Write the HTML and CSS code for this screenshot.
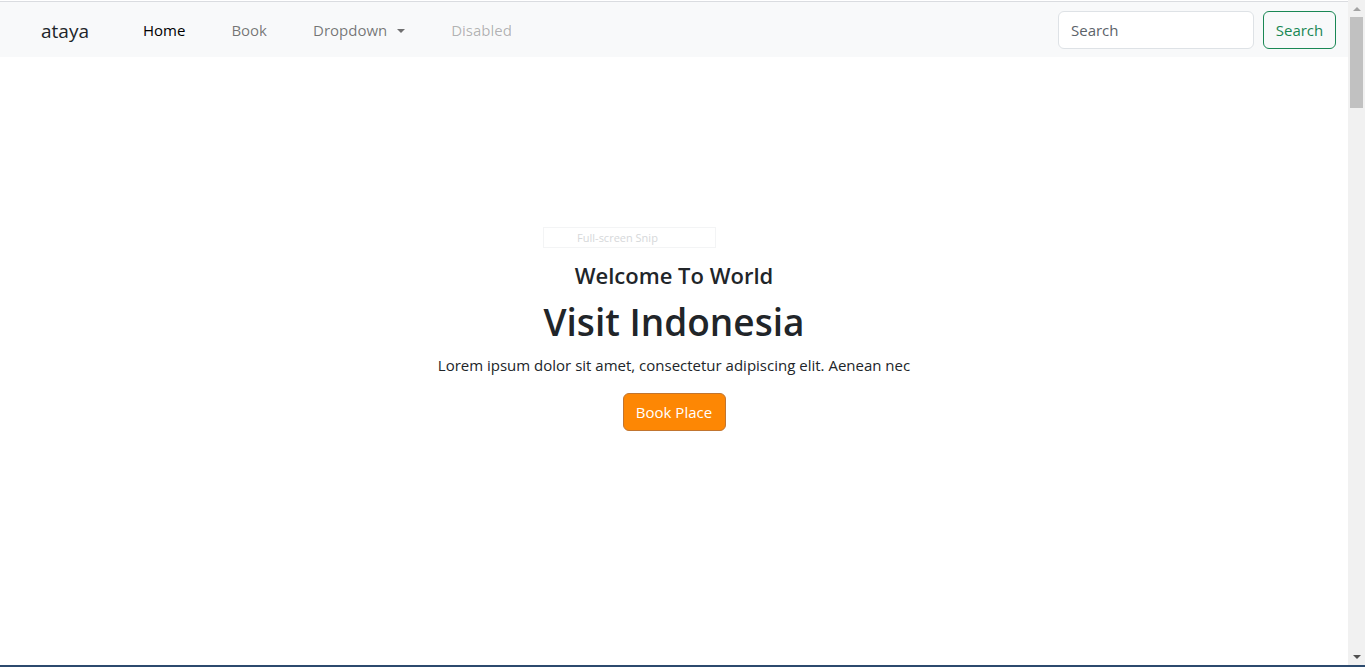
FILE: index.html
```html
<!DOCTYPE html>
<html lang="en">
<head>
<meta charset="utf-8">
<title>ataya</title>
<link rel="stylesheet" href="styles.css">
</head>
<body>
<div class="screen">
  <div class="window">
    <div class="page">
      <div class="topline"></div>
      <nav class="navbar">
        <a class="brand" href="#">ataya</a>
        <ul class="nav">
          <li><a class="nav-link active" href="#">Home</a></li>
          <li><a class="nav-link" href="#">Book</a></li>
          <li><a class="nav-link dropdown" href="#">Dropdown <span class="caret"></span></a></li>
          <li><a class="nav-link disabled" href="#">Disabled</a></li>
        </ul>
        <form class="search">
          <input class="search-input" type="search" placeholder="Search">
          <button class="btn-outline" type="button">Search</button>
        </form>
      </nav>
      <main class="hero">
        <div class="snip">Full-screen Snip</div>
        <h4 class="welcome">Welcome To World</h4>
        <h1 class="title">Visit Indonesia</h1>
        <p class="lead">Lorem ipsum dolor sit amet, consectetur adipiscing elit. Aenean nec</p>
        <button class="btn-book" type="button">Book Place</button>
      </main>
    </div>
    <div class="scrollbar">
      <div class="arrow up"></div>
      <div class="track"><div class="thumb"></div></div>
      <div class="arrow down"></div>
    </div>
  </div>
  <div class="taskbar"></div>
</div>
</body>
</html>
```

FILE: styles.css
```css
* { box-sizing: border-box; }
html, body { margin: 0; padding: 0; }
body {
  font-family: "Open Sans", "Noto Sans", sans-serif;
  color: #212529;
  background: #fff;
  width: 1365px;
  height: 667px;
  overflow: hidden;
}
.screen { display: flex; flex-direction: column; height: 667px; }
.window { display: flex; flex: 1; min-height: 0; }
.page { flex: 1; display: flex; flex-direction: column; }
.topline { height: 2px; border-top: 1px solid #fff; border-bottom: 1px solid #dadce0; }
.navbar {
  height: 55px;
  background: #f8f9fa;
  display: flex;
  align-items: center;
  padding: 0 12px 0 41px;
}
.brand {
  font-size: 19px;
  color: #212529;
  text-decoration: none;
  margin-right: 54px;
  margin-top: 2px;
}
.nav { list-style: none; margin: 0; padding: 0; display: flex; flex: 1; }
.nav-link {
  display: block;
  font-size: 15px;
  color: rgba(0,0,0,.55);
  text-decoration: none;
  margin-right: 46px;
}
.nav-link.active { color: #000; }
.nav-link.disabled { color: rgba(0,0,0,.3); }
.caret {
  display: inline-block;
  width: 0; height: 0;
  border-left: 4px solid transparent;
  border-right: 4px solid transparent;
  border-top: 4px solid rgba(0,0,0,.55);
  vertical-align: 3px;
  margin-left: 6px;
}
.search { display: flex; gap: 9px; align-items: center; }
.search-input {
  width: 196px; height: 38px;
  border: 1px solid #dee2e6;
  border-radius: 6px;
  padding: 0 12px;
  font: 15px "Open Sans", "Noto Sans", sans-serif;
  color: #212529;
  background: #fff;
}
.search-input::placeholder { color: #5c636a; }
.btn-outline {
  height: 38px; width: 73px;
  border: 1px solid #198754;
  border-radius: 6px;
  background: transparent;
  color: #198754;
  font: 15px "Open Sans", "Noto Sans", sans-serif;
  padding: 0;
}
.hero {
  flex: 1;
  display: flex;
  flex-direction: column;
  align-items: center;
  padding-top: 170px;
}
.snip {
  width: 173px; height: 21px;
  border: 1px solid #f3f4f5;
  font-size: 11px;
  color: #d6d8da;
  line-height: 19px;
  text-align: center;
  margin-right: 90px;
  padding-right: 23px;
}
.welcome {
  margin: 14px 0 0;
  font-size: 22px;
  font-weight: 600;
  line-height: 1.2;
}
.title {
  margin: 12px 0 0;
  font-size: 37px;
  font-weight: 600;
  line-height: 1.2;
}
.lead {
  margin: 8px 0 0;
  font-size: 15px;
  line-height: 24px;
}
.btn-book {
  margin-top: 16px;
  height: 38px; width: 103px;
  background: #fd8704;
  border: 1px solid #c17530;
  border-radius: 6px;
  color: #fff;
  font: 15px "Open Sans", "Noto Sans", sans-serif;
  padding: 0;
}
.scrollbar {
  width: 17px;
  background: #f1f1f1;
  display: flex;
  flex-direction: column;
}
.arrow { height: 17px; display: flex; justify-content: center; align-items: center; }
.arrow.up::after {
  content: "";
  border-left: 4px solid transparent;
  border-right: 4px solid transparent;
  border-bottom: 4px solid #a3a3a3;
}
.arrow.down::after {
  content: "";
  border-left: 4px solid transparent;
  border-right: 4px solid transparent;
  border-top: 4px solid #505050;
}
.track { flex: 1; padding: 0 2px; }
.thumb { height: 91px; background: #c1c1c1; }
.taskbar { height: 2px; background: #2c4a6e; }
```
